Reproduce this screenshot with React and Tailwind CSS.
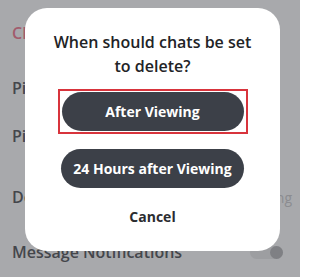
const rows = [
  { label: "Clear Conversation", tone: "text-[#a25b6c]", h: "h-[58px]" },
  { label: "Pin Conversation", tone: "text-[#44464b]", h: "h-[52px]" },
  { label: "Pin Friendship", tone: "text-[#44464b]", h: "h-[44px]" },
  { label: "Delete Chats", tone: "text-[#44464b]", h: "h-[78px]", right: "After Viewing" },
];

export default function App() {
  return (
    <div className="relative w-[300px] h-[277px] overflow-hidden bg-[#a8a9ac] font-['Open_Sans','Noto_Sans',sans-serif]">
      {/* settings list behind the overlay */}
      <div className="flex flex-col pt-[4px]">
        {rows.map((r) => (
          <div
            key={r.label}
            className={`flex items-center justify-between pl-[12px] pr-[8px] ${r.h}`}
          >
            <span className={`text-[16px] font-semibold ${r.tone}`}>{r.label}</span>
            {r.right && <span className="text-[14px] text-[#8b8c90]">{r.right}</span>}
          </div>
        ))}
        <div className="flex items-center justify-between pl-[12px] pr-[17px] h-[32px]">
          <span className="text-[16px] font-semibold text-[#44464b]">Message Notifications</span>
          <div className="relative w-[33px] h-[13px] rounded-full bg-[#9d9ea1]">
            <div className="absolute right-0 top-0 w-[13px] h-[13px] rounded-full bg-[#7f8084]" />
          </div>
        </div>
      </div>

      {/* dialog */}
      <div className="absolute left-[25px] top-[8px] w-[255px] h-[243px] rounded-[22px] bg-white flex flex-col items-center pt-[22px]">
        <p className="text-center text-[16px] leading-[24px] font-semibold text-[#222326]">
          When should chats be set
          <br />
          to delete?
        </p>
        <div className="mt-[11px] border-2 border-[#d8343c] px-[2px] py-[1px]">
          <button className="block w-[182px] h-[39px] rounded-full bg-[#3c4048] text-white text-[14px] font-bold">
            After Viewing
          </button>
        </div>
        <button className="mt-[15px] w-[183px] h-[39px] rounded-full bg-[#3c4048] text-white text-[14px] font-bold">
          24 Hours after Viewing
        </button>
        <button className="mt-[18px] text-[14px] font-bold text-[#2b2c30]">Cancel</button>
      </div>
    </div>
  );
}
